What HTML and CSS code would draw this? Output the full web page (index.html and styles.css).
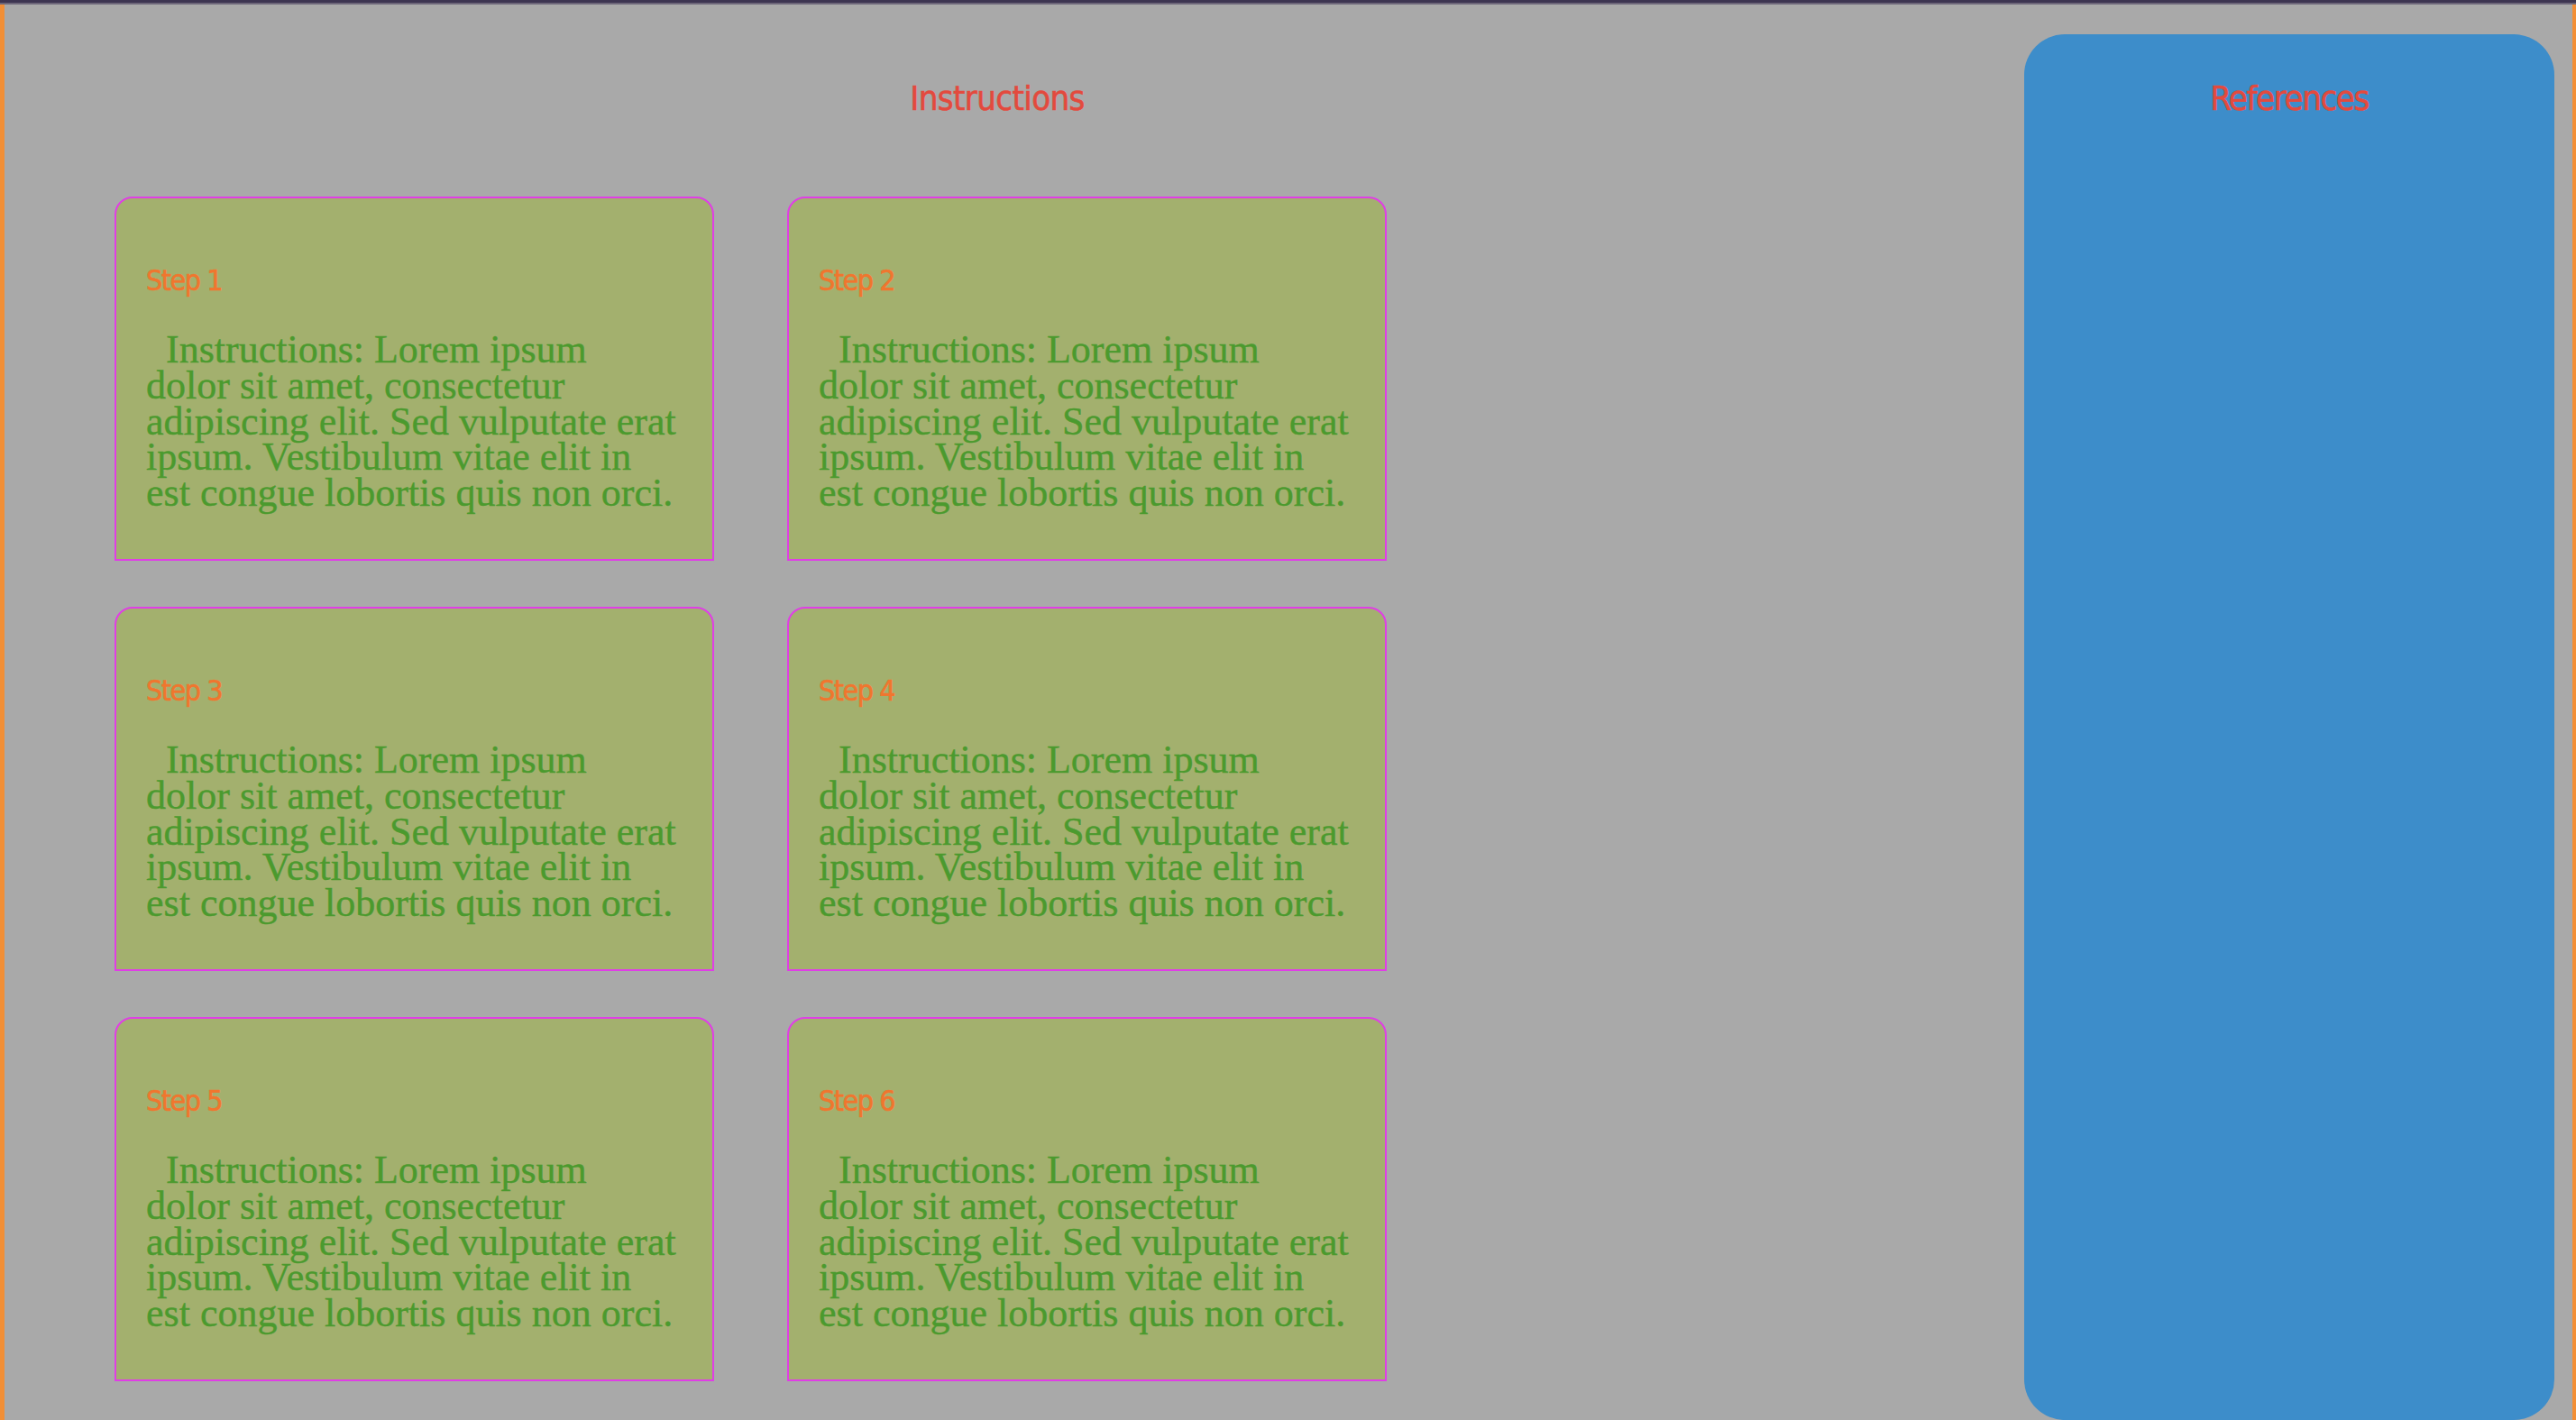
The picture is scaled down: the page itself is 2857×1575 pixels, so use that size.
FILE: index.html
```html
<!DOCTYPE html>
<html lang="en">
<head>
<meta charset="utf-8">
<title>Instructions</title>
<link rel="stylesheet" href="styles.css">
</head>
<body>
<div class="topbar"></div>
<div class="page">
  <main class="instructions">
    <h1 class="section-title section-title--wide">Instructions</h1>
    <div class="steps">
      <div class="step">
        <h2 class="step-title">Step 1</h2>
        <p class="step-text">Instructions: Lorem ipsum<br>dolor sit amet, consectetur<br>adipiscing elit. Sed vulputate erat<br>ipsum. Vestibulum vitae elit in<br>est congue lobortis quis non orci.</p>
      </div>
      <div class="step">
        <h2 class="step-title">Step 2</h2>
        <p class="step-text">Instructions: Lorem ipsum<br>dolor sit amet, consectetur<br>adipiscing elit. Sed vulputate erat<br>ipsum. Vestibulum vitae elit in<br>est congue lobortis quis non orci.</p>
      </div>
      <div class="step">
        <h2 class="step-title">Step 3</h2>
        <p class="step-text">Instructions: Lorem ipsum<br>dolor sit amet, consectetur<br>adipiscing elit. Sed vulputate erat<br>ipsum. Vestibulum vitae elit in<br>est congue lobortis quis non orci.</p>
      </div>
      <div class="step">
        <h2 class="step-title">Step 4</h2>
        <p class="step-text">Instructions: Lorem ipsum<br>dolor sit amet, consectetur<br>adipiscing elit. Sed vulputate erat<br>ipsum. Vestibulum vitae elit in<br>est congue lobortis quis non orci.</p>
      </div>
      <div class="step">
        <h2 class="step-title">Step 5</h2>
        <p class="step-text">Instructions: Lorem ipsum<br>dolor sit amet, consectetur<br>adipiscing elit. Sed vulputate erat<br>ipsum. Vestibulum vitae elit in<br>est congue lobortis quis non orci.</p>
      </div>
      <div class="step">
        <h2 class="step-title">Step 6</h2>
        <p class="step-text">Instructions: Lorem ipsum<br>dolor sit amet, consectetur<br>adipiscing elit. Sed vulputate erat<br>ipsum. Vestibulum vitae elit in<br>est congue lobortis quis non orci.</p>
      </div>
    </div>
  </main>
  <aside class="references">
    <h1 class="section-title section-title--ref">References</h1>
  </aside>
</div>
</body>
</html>
```
FILE: styles.css
```css
html, body {
  margin: 0;
  padding: 0;
  height: 100%;
  overflow: hidden;
  background: #a9a9a9;
}

.topbar {
  height: 3px;
  background: #3d3551;
  border-bottom: 2px solid #6d6679;
}

.page {
  display: flex;
  align-items: flex-start;
  height: 1570px;
  background: #a9a9a9;
  border-left: 5px solid #f28f36;
  border-right: 4px solid #f28f36;
  box-sizing: border-box;
}

.instructions {
  width: 2202px;
  flex: none;
}

.section-title {
  margin: 0;
  font-family: "DejaVu Sans Condensed", "DejaVu Sans", sans-serif;
  font-stretch: condensed;
  font-weight: normal;
  font-size: 38px;
  line-height: 46px;
  color: #e34a3e;
  -webkit-text-stroke: 0.6px #e34a3e;
  text-align: center;
}

.section-title--wide {
  margin-top: 81px;
  letter-spacing: -0.6px;
}

.section-title--ref {
  letter-spacing: -1.4px;
}

.steps {
  display: grid;
  grid-template-columns: 665px 665px;
  grid-auto-rows: 404px;
  column-gap: 81px;
  row-gap: 51px;
  padding-left: 122px;
  margin-top: 86px;
}

.step {
  box-sizing: border-box;
  background: #a3b06e;
  border: 2px solid #e03ee6;
  border-radius: 20px 20px 0 0;
  padding: 72px 33px 0 33px;
}

.step-title {
  margin: 0;
  font-family: "DejaVu Sans Condensed", "DejaVu Sans", sans-serif;
  font-stretch: condensed;
  font-weight: normal;
  font-size: 32px;
  line-height: 38px;
  letter-spacing: -1.5px;
  color: #f0762e;
  -webkit-text-stroke: 0.6px #f0762e;
}

.step-text {
  margin: 38px 0 0 0;
  font-family: "Liberation Serif", "DejaVu Serif", serif;
  font-size: 44px;
  line-height: 39.75px;
  color: #4b9a2e;
  -webkit-text-stroke: 0.4px #4b9a2e;
  text-indent: 22px;
  white-space: nowrap;
}

.references {
  box-sizing: border-box;
  width: 588px;
  height: 1537px;
  margin: 33px 20px 0 38px;
  padding-top: 48px;
  background: #3d8dca;
  border-radius: 45px;
  flex: none;
}
```
